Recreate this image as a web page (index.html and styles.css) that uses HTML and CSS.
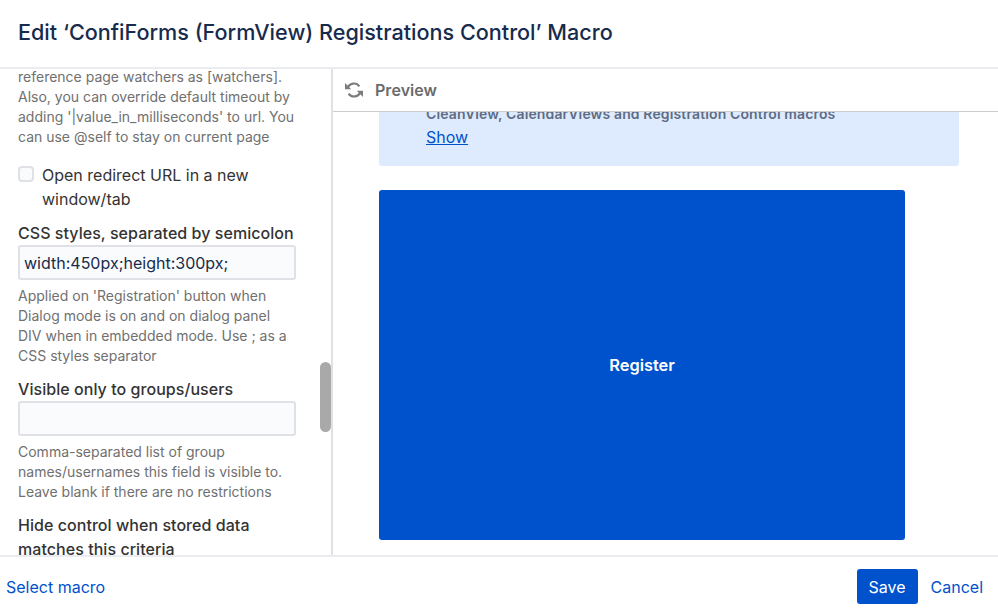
FILE: index.html
```html
<!DOCTYPE html>
<html lang="en">
<head>
  <meta charset="UTF-8">
  <meta name="viewport" content="width=device-width, initial-scale=1.0">
  <title>Edit Macro</title>
  <link rel="stylesheet" href="styles.css">
</head>
<body>
  <div class="dialog">
    <header class="dialog-header">
      <h1>Edit ‘ConfiForms (FormView) Registrations Control’ Macro</h1>
    </header>
    <div class="dialog-body">
      <div class="options">
        <div class="options-scroll">
          <p class="help">reference page watchers as [watchers]. Also, you can override default timeout by adding '|value_in_milliseconds' to url. You can use @self to stay on current page</p>
          <label class="check-row">
            <input type="checkbox" class="check">
            <span>Open redirect URL in a new window/tab</span>
          </label>
          <div class="form-group">
            <label class="field-label" for="css-styles">CSS styles, separated by semicolon</label>
            <input class="text-field" type="text" id="css-styles" value="width:450px;height:300px;">
            <p class="help">Applied on 'Registration' button when Dialog mode is on and on dialog panel DIV when in embedded mode. Use ; as a CSS styles separator</p>
          </div>
          <div class="form-group">
            <label class="field-label" for="visible-to">Visible only to groups/users</label>
            <input class="text-field" type="text" id="visible-to">
            <p class="help">Comma-separated list of group names/usernames this field is visible to. Leave blank if there are no restrictions</p>
          </div>
          <div class="form-group">
            <label class="field-label">Hide control when stored data matches this criteria</label>
          </div>
        </div>
        <div class="scroll-thumb"></div>
      </div>
      <section class="preview">
        <div class="preview-header">
          <svg class="refresh-icon" width="20" height="20" viewBox="0 0 20 20" fill="none" stroke="#7c7c7c" stroke-width="2.2">
            <path d="M3.6 8.4A6.6 6.6 0 0 1 15.4 6.4"/>
            <path d="M16.4 11.6A6.6 6.6 0 0 1 4.6 13.6"/>
            <path d="M1 3v6.2h6.2z" fill="#7c7c7c" stroke="none"/>
            <path d="M19 17v-6.2h-6.2z" fill="#7c7c7c" stroke="none"/>
          </svg>
          <span>Preview</span>
        </div>
        <div class="preview-content">
          <div class="notice">
            <p>CleanView, CalendarViews and Registration Control macros</p>
            <a href="#">Show</a>
          </div>
          <button type="button" class="register-btn">Register</button>
        </div>
      </section>
    </div>
    <footer class="dialog-footer">
      <a href="#" class="footer-link">Select macro</a>
      <div class="footer-actions">
        <button type="button" class="save-btn">Save</button>
        <a href="#" class="footer-link">Cancel</a>
      </div>
    </footer>
  </div>
</body>
</html>
```
FILE: styles.css
```css
* {
  box-sizing: border-box;
  margin: 0;
  padding: 0;
}
html, body {
  height: 100%;
}
body {
  font-family: Inter, 'Liberation Sans', Arial, sans-serif;
  color: #172b4d;
  background-color: #fff;
  overflow: hidden;
}
.dialog {
  display: flex;
  flex-direction: column;
  height: 615px;
}
.dialog-header {
  flex: 0 0 69px;
  display: flex;
  align-items: center;
  padding: 0 18px 4px;
  border-bottom: 2px solid #ebecf0;
}
.dialog-header h1 {
  font-size: 21.6px;
  font-weight: 500;
  color: #172b4d;
}
.dialog-body {
  flex: 1;
  display: flex;
  min-height: 0;
}
.options {
  position: relative;
  flex: 0 0 333px;
  border-right: 2px solid #dfe1e6;
  overflow: hidden;
}
.options-scroll {
  margin-top: -2px;
  padding: 0 34px 0 18px;
}
.help {
  font-size: 14px;
  line-height: 20px;
  color: #707070;
}
.check-row {
  display: flex;
  gap: 8px;
  margin-top: 16px;
  margin-bottom: -1px;
  font-size: 16px;
  line-height: 24px;
  color: #333;
}
.check {
  appearance: none;
  flex: none;
  width: 16px;
  height: 16px;
  margin-top: 3px;
  background-color: #fafbfc;
  border: 2px solid #dfe1e6;
  border-radius: 4px;
}
.form-group {
  margin-top: 11px;
}
.field-label {
  display: block;
  font-size: 16px;
  font-weight: 500;
  line-height: 24px;
  letter-spacing: .05px;
  color: #333;
}
.text-field {
  display: block;
  width: 278px;
  height: 35px;
  margin: 0 0 6px;
  padding: 0 4px;
  font-family: inherit;
  font-size: 16px;
  color: #172b4d;
  background-color: #fafbfc;
  border: 2px solid #dfe1e6;
  border-radius: 3px;
}
.scroll-thumb {
  position: absolute;
  top: 293px;
  right: 0;
  width: 11px;
  height: 70px;
  background-color: #a9a9a9;
  border-radius: 6px;
}
.preview {
  flex: 1;
  display: flex;
  flex-direction: column;
  min-width: 0;
}
.preview-header {
  position: relative;
  z-index: 1;
  flex: 0 0 43px;
  display: flex;
  align-items: center;
  gap: 11px;
  padding: 0 0 0 11px;
  font-size: 16px;
  font-weight: 600;
  letter-spacing: .05px;
  color: #6b6b6b;
  background-color: #fff;
  border-bottom: 1px solid #ccc;
}
.preview-content {
  flex: 1;
  min-height: 0;
  padding: 0 39px 0 46px;
  overflow: hidden;
}
.notice {
  margin-top: -14px;
  padding: 6px 47px 0;
  height: 68px;
  background-color: #deebff;
  border-radius: 3px;
}
.notice p {
  font-size: 14px;
  font-weight: 600;
  line-height: 20px;
  letter-spacing: .13px;
  color: #5e6c84;
}
.notice a {
  display: block;
  margin-top: 1px;
  font-size: 16px;
  line-height: 24px;
  color: #0052cc;
}
.register-btn {
  display: block;
  width: 526px;
  height: 350px;
  margin-top: 24px;
  font-family: inherit;
  font-size: 16.4px;
  font-weight: 600;
  color: #fff;
  background-color: #0052cc;
  border: none;
  border-radius: 3px;
}
.dialog-footer {
  flex: 0 0 60px;
  display: flex;
  align-items: center;
  justify-content: space-between;
  padding: 1px 15px 0 6px;
  border-top: 2px solid #ebecf0;
}
.footer-link {
  font-size: 16px;
  color: #0052cc;
  text-decoration: none;
}
.footer-actions {
  display: flex;
  align-items: center;
  gap: 13px;
}
.save-btn {
  width: 61px;
  height: 35px;
  font-family: inherit;
  font-size: 16px;
  font-weight: 400;
  color: #fff;
  background-color: #0052cc;
  border: none;
  border-radius: 3px;
}
```
